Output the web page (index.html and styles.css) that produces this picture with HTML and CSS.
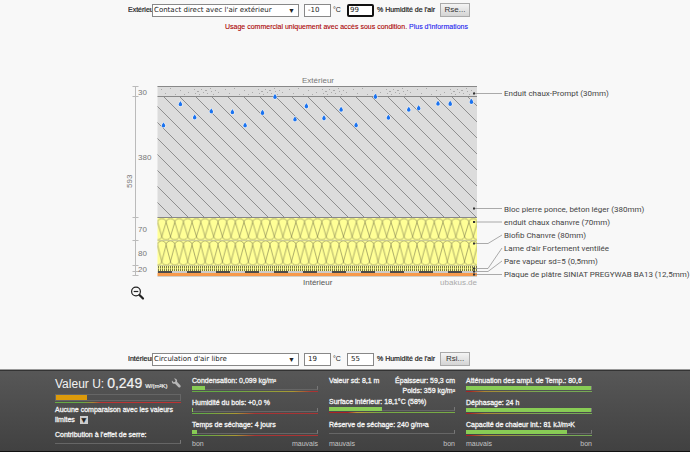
FILE: index.html
```html
<!DOCTYPE html>
<html lang="fr">
<head>
<meta charset="utf-8">
<title>Ubakus</title>
<link rel="stylesheet" href="styles.css">
</head>
<body>
<form class="climate climate-top">
  <label class="side" for="ext">Extérieur</label>
  <span class="picker"><select id="ext"><option>Contact direct avec l'air extérieur</option></select></span>
  <input class="num" id="ext-t" value="-10" aria-label="Température extérieure">
  <label class="unit" for="ext-t">°C</label>
  <input class="num active" id="ext-h" value="99" aria-label="Humidité extérieure">
  <label class="humidity" for="ext-h">% Humidité de l'air</label>
  <button type="button">Rse...</button>
</form>
<p class="notice">Usage commercial uniquement avec accès sous condition. <a href="#">Plus d'informations</a></p>

<main class="stage">
<svg class="section" viewBox="125 70 565 235" role="img" aria-label="Coupe de la paroi">
  <defs>
    <pattern id="hatch" width="16" height="16" x="3" y="0" patternUnits="userSpaceOnUse">
      <path d="M-1 -1L17 17M-1 15L1 17M15 -1L17 1"/>
    </pattern>
    <pattern id="grain" width="64" height="9" x="158" y="87" patternUnits="userSpaceOnUse">
      <path d="M3 2h1M7 6h1M12 1h1M17 7h1M22 3h1M36 2h1M37 6h1M39 4h2M41 7h1M43 2h1M45 5h1M47 3h2M49 6h1M52 1h1M53 4h1M55 7h1M57 3h1M60 5h1M30 5h1M26 7h1"/>
    </pattern>
    <pattern id="wool-a" width="8.65" height="23" x="157.5" y="217.5" patternUnits="userSpaceOnUse">
      <path d="M0 4.6C.5 0 8.15 0 8.65 4.6L4.32 19C3.8 23.4 -3.8 23.4 -4.32 19L0 4.6M0 4.6L4.32 19C4.9 23.4 12.4 23.4 12.97 19L8.65 4.6"/>
    </pattern>
    <pattern id="wool-b" width="8.65" height="25.5" x="157.5" y="240" patternUnits="userSpaceOnUse">
      <path d="M0 5C.5 -.6 8.15 -.6 8.65 5L4.32 21.5C3.8 26.2 -3.8 26.2 -4.32 21.5L0 5M0 5L4.32 21.5C4.9 26.2 12.4 26.2 12.97 21.5L8.65 5"/>
    </pattern>
    <pattern id="fins" width="2" height="6" x="158" y="266" patternUnits="userSpaceOnUse"><path d="M.5 0v2.500M.5 3v2.500"/></pattern>
    <path id="drop" d="M0 -2.8C.5 -1.5 1.8 -.4 1.8 .8A1.8 1.8 0 0 1 -1.8 .8C-1.8 -.4 -.5 -1.5 0 -2.8Z"/>
  </defs>

  <path class="fill-stone" d="M157.5 86H477V218H157.5Z"/>
  <path fill="url(#grain)" d="M158 87H477V96H158Z"/>
  <path fill="url(#hatch)" d="M157.5 97H477V217H157.5Z"/>
  <path class="edge" d="M157.5 86.5H477M157.5 96.5H477"/>
  <path class="fill-wool" d="M157.5 217.5H477V272H157.5Z"/>
  <path fill="url(#wool-a)" d="M157.5 217.5H477V240.5H157.5Z"/>
  <path fill="url(#wool-b)" d="M157.5 240.5H477V265.5H157.5Z"/>
  <path fill="url(#fins)" d="M157.5 266H477V272H157.5Z"/>
  <path class="edge" d="M157.5 217.5H477"/>
  <path class="edge faint" d="M157.5 240.5H477M157.5 265.5H477"/>
  <path class="foil" d="M157.5 272H477"/>
  <path class="foil-dash" d="M158 272H477"/>
  <path class="plaster" d="M157.5 274.5H477"/>
  <path class="edge faint" d="M157.5 276.5H477"/>

  <g class="drops">
    <use href="#drop" x="163.5" y="125"/><use href="#drop" x="180.4" y="103.7"/><use href="#drop" x="194.7" y="117"/><use href="#drop" x="211.3" y="111"/><use href="#drop" x="232.4" y="111.7"/><use href="#drop" x="245.1" y="125"/><use href="#drop" x="262.5" y="112.4"/><use href="#drop" x="275" y="96.5"/><use href="#drop" x="295" y="119"/><use href="#drop" x="306.4" y="105.8"/><use href="#drop" x="324" y="117.8"/><use href="#drop" x="341.1" y="109.2"/><use href="#drop" x="356.1" y="124.8"/><use href="#drop" x="375.4" y="96.3"/><use href="#drop" x="388.4" y="117.2"/><use href="#drop" x="408.8" y="109.2"/><use href="#drop" x="418.7" y="107.8"/><use href="#drop" x="438" y="103.2"/><use href="#drop" x="450.2" y="103.4"/><use href="#drop" x="471.4" y="101.4"/>
  </g>

  <path class="dimension" d="M135.5 86V276M132.500 86.500h6M132.500 96.500h6M132.500 217.500h6M132.500 240.500h6M132.500 265.500h6M132.500 271.500h6M132.500 275.500h6"/>
  <path class="leader" d="M474 93.500H502M474 208.500H502M474 222H502M474 243.500H488L502 235M474 268.500H488L502 248M474 271.500H488L502 261M474 274.500H502"/>
  <path class="pins" d="M473 93.500h2M473 208.500h2M473 222h2M473 243.500h2M473 268.500h2M473 271.500h2M473 274.500h2"/>

  <g class="sizes">
    <text x="138" y="95">30</text><text x="138" y="160">380</text><text x="138" y="232">70</text><text x="138" y="256">80</text><text x="138" y="272">20</text>
    <text transform="translate(132 188) rotate(-90)">593</text>
    <text x="302" y="83">Extérieur</text>
    <text class="inside" x="303" y="285">Intérieur</text>
    <text class="brand" x="477" y="285">ubakus.de</text>
  </g>
  <g class="layers">
    <text x="504" y="96">Enduit chaux-Prompt (30mm)</text>
    <text x="504" y="212">Bloc pierre ponce, béton léger (380mm)</text>
    <text x="504" y="225">enduit chaux chanvre (70mm)</text>
    <text x="504" y="238">Biofib Chanvre (80mm)</text>
    <text x="504" y="251">Lame d'air Fortement ventilée</text>
    <text x="504" y="264">Pare vapeur sd=5 (0,5mm)</text>
    <text x="504" y="277">Plaque de plâtre SINIAT PREGYWAB BA13 (12,5mm)</text>
  </g>
  <g class="zoom">
    <circle cx="136" cy="291.500" r="4.400"/><path d="M133.700 291.500h4.600"/><path class="handle" d="M139.500 295L143 298.500"/>
  </g>
</svg>
</main>

<form class="climate">
  <label class="side" for="int">Intérieur</label>
  <span class="picker"><select id="int"><option>Circulation d'air libre</option></select></span>
  <input class="num" id="int-t" value="19" aria-label="Température intérieure">
  <label class="unit" for="int-t">°C</label>
  <input class="num" id="int-h" value="55" aria-label="Humidité intérieure">
  <label class="humidity" for="int-h">% Humidité de l'air</label>
  <button type="button">Rsi...</button>
</form>

<footer class="results">
  <section class="column">
    <h1><span>Valeur U:</span> <b>0,249</b> <small>W/(m²K)</small>
      <svg class="wrench" viewBox="0 0 10 10"><path d="M1 2.600L2.700 4.200L4.200 3.800L4.500 2.200L3 .600C5 0 6.600 1.600 6 3.700L9.500 7.400C10.200 8.800 8.800 10 7.500 9.200L4 5.700C2 6.300 .300 4.500 1 2.600Z"/></svg></h1>
    <div class="bar big"><i class="amber" style="width:25%"></i></div><div class="scale early"></div>
    <p class="compare">Aucune comparaison avec les valeurs limites <button type="button" class="more" aria-label="Choisir">▼</button></p>
    <p class="effect">Contribution à l'effet de serre:</p>
    <div class="bar"></div>
  </section>
  <section class="column">
    <div class="metric"><p>Condensation: 0,099 kg/m²</p><div class="bar"><i style="width:10%"></i></div><div class="scale late"></div></div>
    <div class="metric"><p>Humidité du bois: +0,0 %</p><div class="bar"><i style="width:1%"></i></div><div class="scale good-first"></div></div>
    <div class="metric"><p>Temps de séchage: 4 jours</p><div class="bar"><i style="width:4%"></i></div><div class="scale good-first"></div></div>
    <div class="ends"><span>bon</span><span>mauvais</span></div>
  </section>
  <section class="column">
    <div class="facts"><p>Valeur sd: 8,1 m</p><p class="right">Épaisseur: 59,3 cm<br>Poids: 359 kg/m²</p></div>
    <div class="metric"><p>Surface intérieur: 18,1°C (58%)</p><div class="bar"><i style="width:42%"></i></div><div class="scale"></div></div>
    <div class="metric"><p>Réserve de séchage: 240 g/m²a</p><div class="bar"></div></div>
    <div class="ends"><span>mauvais</span><span>bon</span></div>
  </section>
  <section class="column">
    <div class="metric"><p>Atténuation des ampl. de Temp.: 80,6</p><div class="bar"><i style="width:100%"></i></div><div class="scale short"></div></div>
    <div class="metric"><p>Déphasage: 24 h</p><div class="bar"><i style="width:100%"></i></div><div class="scale short"></div></div>
    <div class="metric"><p>Capacité de chaleur int.: 81 kJ/m²K</p><div class="bar"><i style="width:81%"></i></div><div class="scale short"></div></div>
    <div class="ends"><span>mauvais</span><span>bon</span></div>
  </section>
</footer>
</body>
</html>
```

FILE: styles.css
```css
* { box-sizing: border-box; }
body {
  margin: 0;
  min-height: 100vh;
  display: flex;
  flex-direction: column;
  background: #f8f8f8;
  color: #222;
  font: 7px/10px "Liberation Sans", Arial, sans-serif;
  overflow-x: hidden;
}
p, h1 { margin: 0; }

.climate { display: flex; align-items: center; padding-left: 128px; height: 14px; }
.climate-top { margin-top: 3px; }
.side { width: 24px; overflow: hidden; white-space: nowrap; -webkit-text-stroke: 0.2px; }
.picker { position: relative; display: flex; }
.picker::after { content: "▼"; position: absolute; right: 4px; top: 2px; font-size: 7px; pointer-events: none; }
select, .num {
  height: 13px;
  border: 1px solid #888;
  border-radius: 0;
  background: #fff;
  color: #222;
  font: 7px/11px "DejaVu Sans", Verdana, sans-serif;
  padding: 0 2px;
  outline: 0;
}
select { width: 147px; appearance: none; padding: 0 1px; }
.num { width: 27px; margin-left: 5px; padding: 0 3px; }
.num.active { border: 2px solid #111; border-radius: 2px; padding: 0 1px; }
.unit { width: 10px; margin-left: 2px; }
.unit + .num { margin-left: 4px; }
.humidity { width: 63px; margin-left: 3px; white-space: nowrap; -webkit-text-stroke: 0.2px; }
.climate button {
  width: 30px;
  height: 14px;
  padding: 0;
  border: 1px solid #aaa;
  background: linear-gradient(#f4f4f4, #d4d4d4);
  color: #333;
  font: 8px/12px "Liberation Sans", Arial, sans-serif;
}
.notice { padding-left: 225px; margin-top: 5px; color: #a00; white-space: nowrap; -webkit-text-stroke: 0.1px; }
.notice a { color: #22e; text-decoration: none; }

.stage { flex: 1; padding: 38px 0 0 125px; }
.section { display: block; width: 565px; max-width: none; height: 235px; }
.section text { font: 8px "Liberation Sans", Arial, sans-serif; }
.section .layers text { font-family: Roboto, "Liberation Sans", sans-serif; }
pattern path { fill: none; stroke: #8e8e8e; stroke-width: 1; }
#grain path { stroke: #aaa; transform: translate(0, 0.5px); }
#wool-a path, #wool-b path { stroke: #77774a; stroke-width: 0.6; }
#fins path { stroke: #77774a; }
.fill-stone { fill: #dcdcdc; }
.fill-wool { fill: #ffff96; }
.edge { stroke: #888; }
.edge.faint { stroke: #aaaaa0; stroke-width: 0.5; }
.foil { stroke: #ccc; stroke-width: 2; }
.foil-dash { stroke: #222; stroke-width: 1.4; stroke-dasharray: 14 15; }
.plaster { stroke: #f79a4c; stroke-width: 3; }
.drops { fill: #1a73f0; stroke: #fff; stroke-width: 1; paint-order: stroke; }
.dimension { fill: none; stroke: #bbb; }
.leader { fill: none; stroke: #888; stroke-width: 0.7; }
.pins { stroke: #333; stroke-width: 2; }
.sizes { fill: #777; }
.section .inside { fill: #555; }
.section .brand { fill: #aaa; text-anchor: end; }
.layers { fill: #444; }
.zoom { fill: none; stroke: #222; stroke-width: 1.2; }
.zoom .handle { stroke-width: 2.2; stroke-linecap: round; }

.results {
  display: grid;
  grid-template-columns: repeat(4, 1fr);
  gap: 11px;
  height: 82px;
  margin-top: 4px;
  padding: 5px 98px 0 55px;
  border-top: 1px solid #333;
  border-bottom: 1px solid #111;
  background: linear-gradient(#575757, #414141);
  box-shadow: 0 -1px #999;
  color: #f2f2f2;
  overflow: hidden;
  -webkit-text-stroke: 0.3px;
}
.column { min-width: 0; white-space: nowrap; }
.metric { height: 22px; }
.bar { height: 4px; border-right: 1px solid #777; border-bottom: 1px solid #666; }
.bar i { display: block; height: 4px; background: #8c5; }
.bar.big { height: 7px; border: 1px solid #666; }
.bar.big .amber { height: 5px; background: #dc9a0a; }
.scale { height: 1px; margin-top: 1px; background: linear-gradient(90deg, #a22 15%, #b93 22%, #7a4 40%, #7a4); }
.scale.short { background: linear-gradient(90deg, #a22 3%, #a83 15%, #7a5 60%); }
.scale.good-first { background: linear-gradient(90deg, #6a4 10%, #a93 35%, #a33 50%); }
.scale.early { background: linear-gradient(90deg, #6a4 22%, #a83 30%, #b33 36%); }
.scale.late { background: linear-gradient(90deg, #6a4 30%, #a93 80%, #a33 95%); }
.ends, .facts { display: flex; justify-content: space-between; }
.metric + .ends { margin-top: -3px; }
.ends { color: #c4c4c4; -webkit-text-stroke: 0; }
.facts { height: 21px; }
.facts + .metric { height: 23px; }
.right { text-align: right; }
h1 { display: flex; align-items: baseline; height: 18px; font: 12px/15px "Liberation Sans", Arial, sans-serif; -webkit-text-stroke: 0; }
h1 b { margin-left: 3px; font-size: 14px; font-weight: 400; -webkit-text-stroke: 0.2px; }
h1 small { margin-left: 3px; font-size: 6px; -webkit-text-stroke: 0.2px; }
.wrench { width: 10px; height: 10px; margin-left: auto; fill: #b8b8b8; }
.compare { white-space: normal; margin-top: 2px; }
.more { width: 8px; height: 8px; margin-left: 3px; padding: 0; border: 0; background: #ccc; color: #222; font: 6px/8px "DejaVu Sans", sans-serif; }
.effect { margin-top: 5px; }
```
